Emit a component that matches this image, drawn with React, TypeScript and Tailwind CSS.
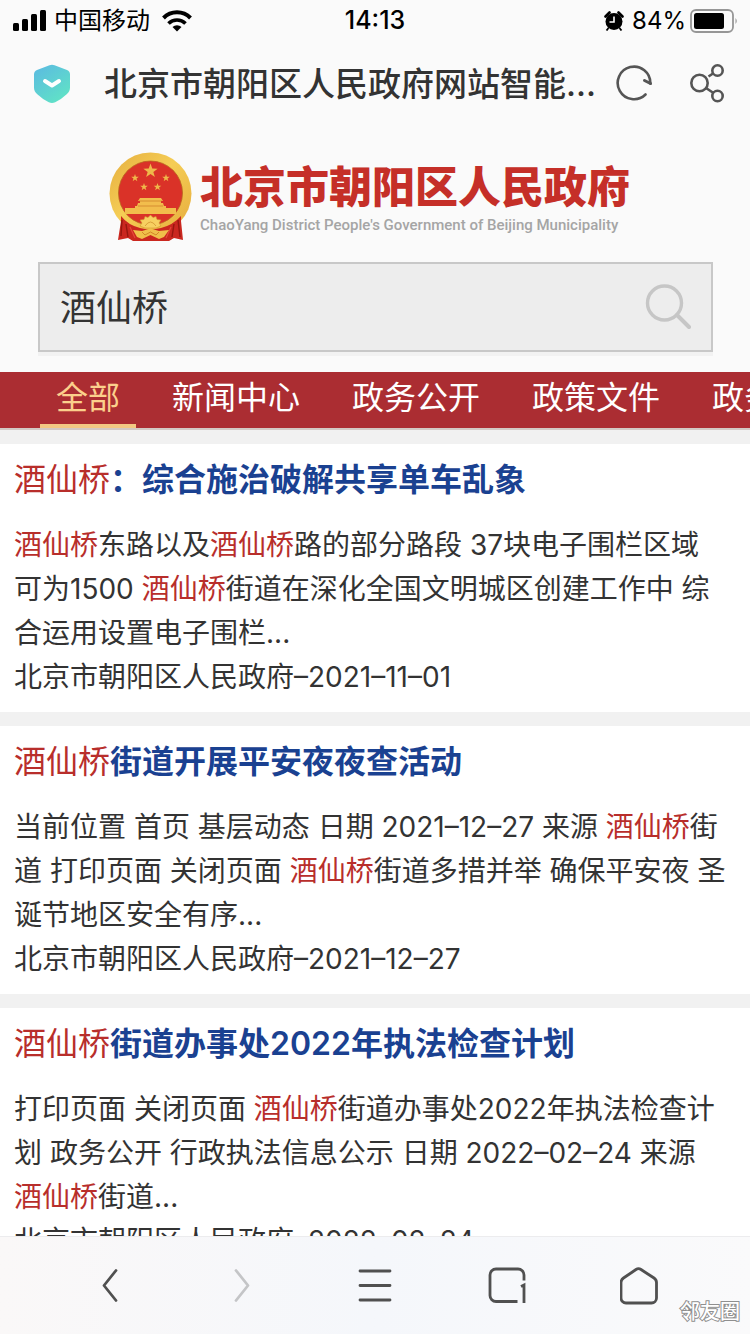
import { Fragment, useState } from "react";
import type { ReactNode } from "react";

const KEYWORD = "酒仙桥";

const TABS = ["全部", "新闻中心", "政务公开", "政策文件", "政务服务"] as const;

interface SearchResult {
  id: string;
  title: string;
  lines: string[];
  source: string;
}

const RESULTS: SearchResult[] = [
  {
    id: "bike",
    title: "酒仙桥：综合施治破解共享单车乱象",
    lines: [
      "酒仙桥东路以及酒仙桥路的部分路段 37块电子围栏区域",
      "可为1500 酒仙桥街道在深化全国文明城区创建工作中 综",
      "合运用设置电子围栏...",
    ],
    source: "北京市朝阳区人民政府–2021–11–01",
  },
  {
    id: "night",
    title: "酒仙桥街道开展平安夜夜查活动",
    lines: [
      "当前位置 首页 基层动态 日期 2021–12–27 来源 酒仙桥街",
      "道 打印页面 关闭页面 酒仙桥街道多措并举 确保平安夜 圣",
      "诞节地区安全有序...",
    ],
    source: "北京市朝阳区人民政府–2021–12–27",
  },
  {
    id: "plan",
    title: "酒仙桥街道办事处2022年执法检查计划",
    lines: [
      "打印页面 关闭页面 酒仙桥街道办事处2022年执法检查计",
      "划 政务公开 行政执法信息公示 日期 2022–02–24 来源",
      "酒仙桥街道...",
    ],
    source: "北京市朝阳区人民政府–2022–02–24",
  },
];

/** Wraps every occurrence of the keyword in a red mark. */
function highlight(text: string): ReactNode {
  return text.split(KEYWORD).map((part, i) => (
    <Fragment key={i}>
      {i > 0 && <em className="font-normal not-italic text-[#b82e2b]">{KEYWORD}</em>}
      {part}
    </Fragment>
  ));
}

function starPoints(cx: number, cy: number, r: number): string {
  return Array.from({ length: 10 }, (_, i) => {
    const rad = ((i * 36 - 90) * Math.PI) / 180;
    const d = i % 2 === 0 ? r : r * 0.4;
    return `${(cx + Math.cos(rad) * d).toFixed(2)},${(cy + Math.sin(rad) * d).toFixed(2)}`;
  }).join(" ");
}

function Emblem() {
  return (
    <svg viewBox="0 0 84 90" className="h-[90px] w-[84px] shrink-0" aria-hidden="true">
      <defs>
        <linearGradient id="gold" x1="0" y1="0" x2="1" y2="1">
          <stop offset="0" stopColor="#e5ae3f" />
          <stop offset="0.45" stopColor="#f5cd55" />
          <stop offset="1" stopColor="#e6ab3c" />
        </linearGradient>
      </defs>
      <circle cx="42.5" cy="41.5" r="41" fill="url(#gold)" />
      <circle cx="42.5" cy="41" r="32" fill="#da3228" stroke="#b9651f" strokeWidth="0.8" />
      <g fill="#efb84a">
        <polygon points={starPoints(42.5, 19, 7.5)} />
        <polygon points={starPoints(27, 26, 4)} />
        <polygon points={starPoints(58, 26, 4)} />
        <polygon points={starPoints(36, 35, 4)} />
        <polygon points={starPoints(49.5, 35, 4)} />
      </g>
      <path d="M32 46h21l2 3h-2v2h2l1 3H29l1-3h2v-2h-2z" fill="#f2bd4c" />
      <path d="M27 54h31v2h10v6H17v-6h10z" fill="#f2bd4c" />
      <path d="M31 49h23M30 54h25" stroke="#c4701f" strokeWidth="0.6" />
      {/* red drapery on both sides of the cog wheel */}
      <path d="M13 64q7 9 19 12l10 2 11-2q12-3 20-12v5l2 19-9-2-5 3H25l-5-3-10 2 3-19z" fill="#ca271f" />
      <path d="M14 68l-1 16M18 72l2 13M70 68l2 17M66 72l-2 13" stroke="#96170f" strokeWidth="1.4" />
      <path d="M22 75l5 11M63 75l-5 11" stroke="#e5483a" strokeWidth="1.2" />
      <path
        d="M32 74l2-3-2-3 4-.500 1-3 3 1 2.500-2.500L45 65.500l3-1 1 3 4 .500-2 3 2 3-5 2H37z"
        fill="#f7d061"
        stroke="#d1932e"
        strokeWidth="0.6"
      />
      <path d="M37 74q5.500-8 11 0" fill="none" stroke="#d1932e" strokeWidth="0.8" />
      <path d="M25 78l9 1 8.500-2.500 8.500 2.500 10-1-5 7-5 2-8.500-4-8.500 4-5-2z" fill="#f0bf4a" />
      <path d="M34 80l3 3 5.500-3 5.500 3 3-3" fill="none" stroke="#c9781f" strokeWidth="0.8" />
    </svg>
  );
}

function StatusBar() {
  return (
    <div className="grid h-10 grid-cols-[1fr_auto_1fr] items-center px-3 pt-px text-2xl text-black">
      <div className="flex items-center">
        <svg viewBox="0 0 34 22" className="h-[22px] w-[34px]" fill="#000" aria-hidden="true">
          <rect x="1" y="13" width="6" height="8" rx="1.5" />
          <rect x="10" y="9" width="6" height="12" rx="1.5" />
          <rect x="19" y="4" width="6" height="17" rx="1.5" />
          <rect x="28" y="0" width="6" height="21" rx="1.5" />
        </svg>
        <span className="ml-2">中国移动</span>
        <svg viewBox="0 0 30 22" className="ml-3 h-[22px] w-[30px]" aria-hidden="true">
          <path d="M1.500 8a19 19 0 0 1 27 0" fill="none" stroke="#000" strokeWidth="4" />
          <path d="M6.500 13.500a12 12 0 0 1 17 0" fill="none" stroke="#000" strokeWidth="3.6" />
          <path d="M10.500 17a6.500 6.500 0 0 1 9 0L15 21.500z" fill="#000" />
        </svg>
      </div>
      <span className="text-[25px] font-medium">14:13</span>
      <div className="flex items-center justify-end">
        <svg viewBox="0 0 20 20" className="h-5 w-5" aria-hidden="true">
          <circle cx="10" cy="10.5" r="8.5" />
          <path d="M1.500 5.500l4-4M18.500 5.500l-4-4" stroke="#000" strokeWidth="2.6" strokeLinecap="round" />
          <path d="M4.500 17l-2 2.500M15.500 17l2 2.500" stroke="#000" strokeWidth="1.8" />
          <path d="M10 5.500V11H5.500" fill="none" stroke="#fff" strokeWidth="1.6" />
        </svg>
        <span className="ml-2">84%</span>
        <svg viewBox="0 0 48 24" className="ml-1 h-6 w-12" aria-hidden="true">
          <rect x="1" y="1" width="42" height="22" rx="5" fill="none" stroke="#969696" strokeWidth="1.8" />
          <rect x="4" y="4" width="30" height="16" rx="2.5" />
          <path d="M45.500 9v6q2.500-3 0-6z" fill="#969696" />
        </svg>
      </div>
    </div>
  );
}

function BrowserBar() {
  return (
    <div className="flex h-22 items-center px-6">
      <svg viewBox="0 0 38 40" className="ml-2 h-10 w-[38px] shrink-0" aria-hidden="true">
        <defs>
          <linearGradient id="shield" x1="0" y1="0" x2="0.7" y2="1">
            <stop offset="0" stopColor="#5bb9e2" />
            <stop offset="1" stopColor="#60e2c6" />
          </linearGradient>
        </defs>
        <path
          d="M17.500 1.300q2.500-1 5 0L35 6q3 1.300 3 4.500v13q0 4-3.300 6.800-5 4.800-11.500 8-3.200 1.400-6.400 0-6.500-3.200-11.500-8Q2 27.500 2 23.500v-13Q2 7.300 5 6z"
          fill="url(#shield)"
        />
        <path d="M13 17l7 4.500 7-4.500" fill="none" stroke="#fff" strokeWidth="4" strokeLinecap="round" strokeLinejoin="round" />
      </svg>
      <h1 className="ml-[34px] min-w-0 flex-1 pt-0.5 text-[33px] font-medium whitespace-nowrap text-[#333]">
        北京市朝阳区人民政府网站智能...
      </h1>
      <button type="button" aria-label="刷新" className="shrink-0">
        <svg viewBox="0 0 38 38" className="h-[38px] w-[38px]" fill="none" stroke="#555" strokeWidth="2.6" strokeLinecap="round" strokeLinejoin="round" aria-hidden="true">
          <path d="M29.500 29.500A16.300 16.300 0 1 1 34.300 18.500" />
          <path d="M28.500 15.500l6 3" strokeWidth="3" />
        </svg>
      </button>
      <button type="button" aria-label="分享" className="ml-9 shrink-0">
        <svg viewBox="0 0 36 40" className="h-10 w-9" fill="none" stroke="#555" strokeWidth="2.6" aria-hidden="true">
          <circle cx="9.5" cy="19" r="8.2" />
          <circle cx="27.5" cy="6.5" r="5.2" />
          <circle cx="27.500" cy="32" r="5.2" />
          <path d="M18.500 12.500l4.500-3M16 24l7.500 5" />
        </svg>
      </button>
    </div>
  );
}

function SearchForm() {
  const [query, setQuery] = useState(KEYWORD);

  return (
    <form
      role="search"
      onSubmit={(e) => e.preventDefault()}
      className="ml-[38px] mr-[37px] flex h-[90px] items-center border-2 border-[#c8c8c8] bg-[#ededed] px-5 shadow-[0_4px_0_#f2f2f2]"
    >
      <input
        type="text"
        aria-label="搜索"
        value={query}
        onChange={(e) => setQuery(e.target.value)}
        className="min-w-0 flex-1 bg-transparent pt-0.5 text-4xl text-[#333] outline-none"
      />
      <button type="submit" aria-label="搜索" className="shrink-0">
        <svg viewBox="0 0 46 46" className="h-[46px] w-[46px]" fill="none" stroke="#c6c6c6" strokeWidth="3.4" aria-hidden="true">
          <circle cx="19.5" cy="19" r="17" />
          <path d="M32 31l12 12" strokeWidth="4" strokeLinecap="round" />
        </svg>
      </button>
    </form>
  );
}

function CategoryTabs() {
  const [active, setActive] = useState<string>(TABS[0]);

  return (
    <nav className="mt-5 flex h-[58px] gap-5 overflow-hidden border-b-2 border-[#d3c9c4] bg-[#ab2d32] pl-10">
      {TABS.map((tab) => (
        <button
          key={tab}
          type="button"
          onClick={() => setActive(tab)}
          className={`shrink-0 border-b-4 px-4 text-[32px] leading-[52px] ${
            tab === active ? "border-[#f3c883] text-[#fbd08c]" : "border-transparent text-white"
          }`}
        >
          {tab}
        </button>
      ))}
    </nav>
  );
}

function ResultItem({ result }: Readonly<{ result: SearchResult }>) {
  return (
    <article className="bg-white px-3.5 pt-3 pb-[13px]">
      <h2 className="mb-[19px] text-[32px] leading-12 font-semibold text-[#1a4191]">
        <a href={`#${result.id}`}>{highlight(result.title)}</a>
      </h2>
      <div className="text-[28px] leading-11 whitespace-nowrap text-[#333]">
        {result.lines.map((line) => (
          <p key={line}>{highlight(line)}</p>
        ))}
        <p>{result.source}</p>
      </div>
    </article>
  );
}

function BottomBar() {
  return (
    <footer className="relative h-[98px] shrink-0 border-t border-[#ececee] bg-linear-to-r from-[#faf8f8] via-[#f5f7fb] to-[#fafafb]">
      <div className="grid h-full grid-cols-5 place-items-center px-11 text-[#505050]">
        <button type="button" aria-label="后退">
          <svg viewBox="0 0 40 40" className="h-10 w-10" fill="none" stroke="currentColor" strokeWidth="2.8" strokeLinecap="round" strokeLinejoin="round" aria-hidden="true">
            <path d="M26 4.500L14 19.500l12 15" />
          </svg>
        </button>
        <button type="button" aria-label="前进" className="text-[#c4c5c7]">
          <svg viewBox="0 0 40 40" className="h-10 w-10" fill="none" stroke="currentColor" strokeWidth="2.8" strokeLinecap="round" strokeLinejoin="round" aria-hidden="true">
            <path d="M13 4.500l12 15-12 15" />
          </svg>
        </button>
        <button type="button" aria-label="菜单">
          <svg viewBox="0 0 40 40" className="h-10 w-10" fill="none" stroke="currentColor" strokeWidth="2.8" strokeLinecap="round" aria-hidden="true">
            <path d="M5 5h30M5 19.500h30M5 34h30" />
          </svg>
        </button>
        <button type="button" aria-label="窗口 1">
          <svg viewBox="0 0 40 40" className="h-10 w-10" fill="none" stroke="currentColor" strokeWidth="2.8" aria-hidden="true">
            <path d="M37 14.500V9a6 6 0 0 0-6-6H9a6 6 0 0 0-6 6v20.500a6 6 0 0 0 6 6h21.500" />
            <path d="M34 20.500l3-1.500v18" />
          </svg>
        </button>
        <button type="button" aria-label="主页">
          <svg viewBox="0 0 40 40" className="h-10 w-10" fill="none" stroke="currentColor" strokeWidth="2.8" strokeLinejoin="round" aria-hidden="true">
            <path d="M15.500 3.500q2.500-1.700 5 0L33.500 12q2.500 1.700 2.500 4.500V32a5 5 0 0 1-5 5H5.500a5 5 0 0 1-5-5V16.500q0-2.800 2.500-4.500z" transform="translate(.5 0)" />
          </svg>
        </button>
      </div>
      <span className="absolute right-2.5 bottom-1.5 text-xl leading-8 font-medium text-white [-webkit-text-stroke:2px_#8f8f8f] [paint-order:stroke_fill]">
        邻友圈
      </span>
    </footer>
  );
}

export default function App() {
  return (
    <div className="flex h-screen flex-col overflow-hidden bg-[#fafafa] font-[Inter,'Noto_Sans_CJK_SC',sans-serif]">
      <header className="shrink-0">
        <StatusBar />
        <BrowserBar />
      </header>

      <main className="min-h-0 flex-1 overflow-y-auto [scrollbar-width:none]">
        <div className="flex items-start justify-center gap-2 pt-6 pr-3 pb-5">
          <Emblem />
          <div className="pt-[7px] whitespace-nowrap">
            <p className="text-[43px] leading-14 font-black text-[#c52f28]">北京市朝阳区人民政府</p>
            <p className="font-[Roboto,sans-serif] text-[15px] leading-5 font-medium text-[#a5a5a5]">
              ChaoYang District People's Government of Beijing Municipality
            </p>
          </div>
        </div>
        <SearchForm />
        <CategoryTabs />
        <div className="flex flex-col gap-3.5 bg-[#f1f1f1] pt-3.5">
          {RESULTS.map((result) => (
            <ResultItem key={result.id} result={result} />
          ))}
        </div>
      </main>

      <BottomBar />
    </div>
  );
}
